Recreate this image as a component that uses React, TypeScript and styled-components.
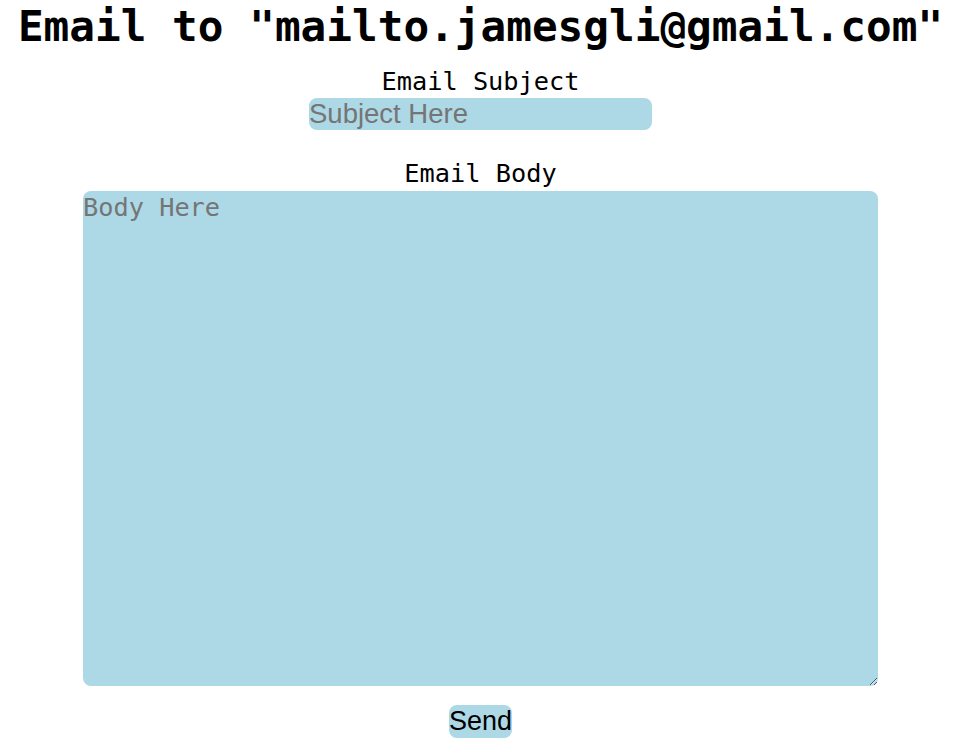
import React from "react";
import styled, { createGlobalStyle } from "styled-components";

const Global = createGlobalStyle`
  html, body { margin: 0; padding: 0; background: #ffffff; }
  body { font-family: "DejaVu Sans Mono", monospace; color: #000; }
`;

const Page = styled.main`
  display: flex;
  flex-direction: column;
  align-items: center;
  padding: 1px 12px 0 0;
`;

const Title = styled.h1`
  margin: 0;
  font-family: "DejaVu Sans Mono", monospace;
  font-weight: bold;
  font-size: 42.7px;
  line-height: 50px;
  white-space: nowrap;
`;

const Label = styled.label<{ $top: number }>`
  display: block;
  margin-top: ${(p) => p.$top}px;
  font-family: "DejaVu Sans Mono", monospace;
  font-size: 25.3px;
  line-height: 30px;
`;

const SubjectInput = styled.input`
  box-sizing: border-box;
  width: 343px;
  height: 32px;
  margin-top: 1px;
  padding: 0;
  border: none;
  outline: none;
  border-radius: 8px;
  background: #add8e6;
  font-family: "Liberation Sans", Arial, sans-serif;
  font-size: 27.5px;
  color: #000;
  &::placeholder { color: #757575; }
`;

const BodyArea = styled.textarea`
  box-sizing: border-box;
  width: 795px;
  height: 495px;
  margin-top: 2px;
  padding: 2px 0 1px;
  border: none;
  outline: none;
  border-radius: 8px;
  background: #add8e6;
  font-family: "DejaVu Sans Mono", monospace;
  font-size: 25.3px;
  color: #000;
  &::placeholder { color: #757575; }
`;

const SendButton = styled.button`
  box-sizing: border-box;
  margin-top: 19px;
  height: 33px;
  padding: 0;
  border: none;
  border-radius: 8px;
  background: #add8e6;
  font-family: "Liberation Sans", Arial, sans-serif;
  font-size: 27px;
  color: #000;
  cursor: pointer;
`;

export default function App() {
  return (
    <>
      <Global />
      <Page>
        <Title>Email to "mailto.jamesgli@gmail.com"</Title>
        <Label $top={16} htmlFor="subject">Email Subject</Label>
        <SubjectInput id="subject" placeholder="Subject Here" />
        <Label $top={29} htmlFor="body">Email Body</Label>
        <BodyArea id="body" placeholder="Body Here" />
        <SendButton>Send</SendButton>
      </Page>
    </>
  );
}
